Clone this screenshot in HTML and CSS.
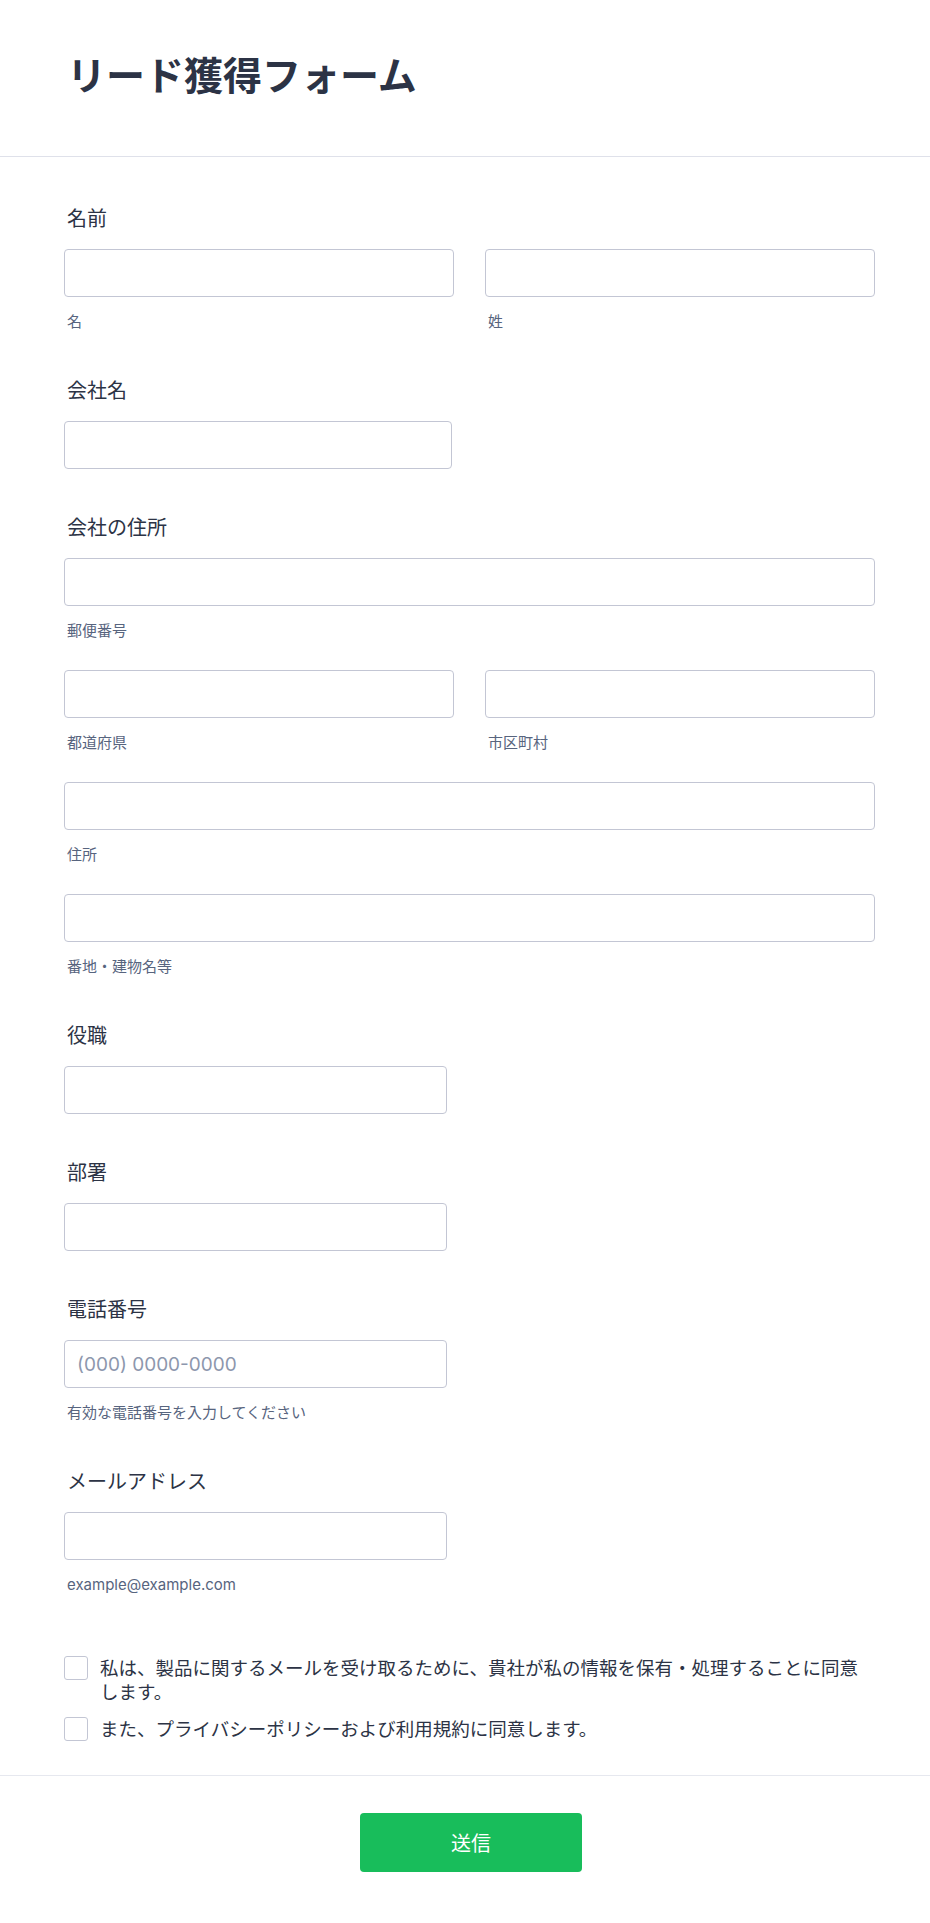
FILE: index.html
```html
<!DOCTYPE html>
<html lang="ja">

<head>
    <meta charset="UTF-8">
    <title>リード獲得フォーム</title>
    <link rel="stylesheet" href="styles.css">
</head>

<body>
    <div class="form">
        <!-- 标题 -->
        <div class="form-header">
            <h1>リード獲得フォーム</h1>
        </div>

        <div class="form-body">
            <div class="field">
                <label class="label">名前</label>
                <div class="row">
                    <div class="col">
                        <input type="text" class="input">
                        <span class="sub">名</span>
                    </div>
                    <div class="col">
                        <input type="text" class="input">
                        <span class="sub">姓</span>
                    </div>
                </div>
            </div>

            <div class="field">
                <label class="label">会社名</label>
                <input type="text" class="input w-half">
            </div>

            <div class="field">
                <label class="label">会社の住所</label>
                <div class="col">
                    <input type="text" class="input">
                    <span class="sub">郵便番号</span>
                </div>
                <div class="row addr">
                    <div class="col">
                        <input type="text" class="input">
                        <span class="sub">都道府県</span>
                    </div>
                    <div class="col">
                        <input type="text" class="input">
                        <span class="sub">市区町村</span>
                    </div>
                </div>
                <div class="col addr">
                    <input type="text" class="input">
                    <span class="sub">住所</span>
                </div>
                <div class="col addr">
                    <input type="text" class="input">
                    <span class="sub">番地・建物名等</span>
                </div>
            </div>

            <div class="field">
                <label class="label">役職</label>
                <input type="text" class="input w-sm">
            </div>

            <div class="field">
                <label class="label">部署</label>
                <input type="text" class="input w-sm">
            </div>

            <div class="field">
                <label class="label">電話番号</label>
                <input type="text" class="input w-sm" placeholder="(000) 0000-0000">
                <span class="sub">有効な電話番号を入力してください</span>
            </div>

            <div class="field">
                <label class="label">メールアドレス</label>
                <input type="text" class="input w-sm">
                <span class="sub">example@example.com</span>
            </div>

            <!-- 同意チェック -->
            <div class="checks">
                <label class="check">
                    <span class="box"></span>
                    <span>私は、製品に関するメールを受け取るために、貴社が私の情報を保有・処理することに同意します。</span>
                </label>
                <label class="check">
                    <span class="box"></span>
                    <span>また、プライバシーポリシーおよび利用規約に同意します。</span>
                </label>
            </div>
        </div>

        <div class="form-footer">
            <button class="submit">送信</button>
        </div>
    </div>
</body>

</html>
```

FILE: styles.css
```css
* {
    margin: 0;
    padding: 0;
    box-sizing: border-box;
}

body {
    font-family: "Inter", "Noto Sans CJK JP", sans-serif;
    color: #2c3345;
    background-color: #fff;
}

.form-header {
    height: 157px;
    padding: 52px 67px 0;
    border-bottom: 1px solid #dfe1ea;
}

.form-header h1 {
    font-size: 39px;
    line-height: 48px;
    font-weight: 700;
    color: #2c3345;
}

.form-body {
    padding: 50px 55px 34px 64px;
}

.field {
    display: flex;
    flex-direction: column;
    margin-bottom: 47px;
}

.label {
    font-size: 20px;
    line-height: 24px;
    margin-bottom: 18px;
    padding-left: 3px;
}

.row {
    display: flex;
    gap: 31px;
}

.row .col {
    flex: 1;
}

.col {
    display: flex;
    flex-direction: column;
}

/* 住所の2段目以降 */
.addr {
    margin-top: 29px;
}

.input {
    width: 100%;
    height: 48px;
    border: 1px solid #c3c6d4;
    border-radius: 4px;
    padding: 0 12px;
    font-family: inherit;
    font-size: 19px;
    color: #2c3345;
    background: #fff;
}

.input::placeholder {
    color: #8d97ad;
}

.w-half {
    width: 388px;
}

.w-sm {
    width: 383px;
}

.sub {
    font-size: 15px;
    line-height: 20px;
    margin-top: 15px;
    padding-left: 3px;
    color: #57647e;
}

.checks {
    padding-top: 14px;
}

.check {
    display: flex;
    align-items: flex-start;
    gap: 12px;
    font-size: 18.5px;
    line-height: 24px;
    margin-bottom: 13px;
}

.check:last-child {
    margin-bottom: 0;
}

.check .box {
    flex: none;
    width: 24px;
    height: 24px;
    border: 1px solid #c3c6d4;
    border-radius: 3px;
}

.form-footer {
    border-top: 1px solid #e6e8ef;
    padding: 37px 52px 50px 64px;
    text-align: center;
}

.submit {
    width: 222px;
    height: 59px;
    border: none;
    border-radius: 4px;
    background-color: #18bd5b;
    color: #fff;
    font-family: inherit;
    font-size: 20px;
}
```
